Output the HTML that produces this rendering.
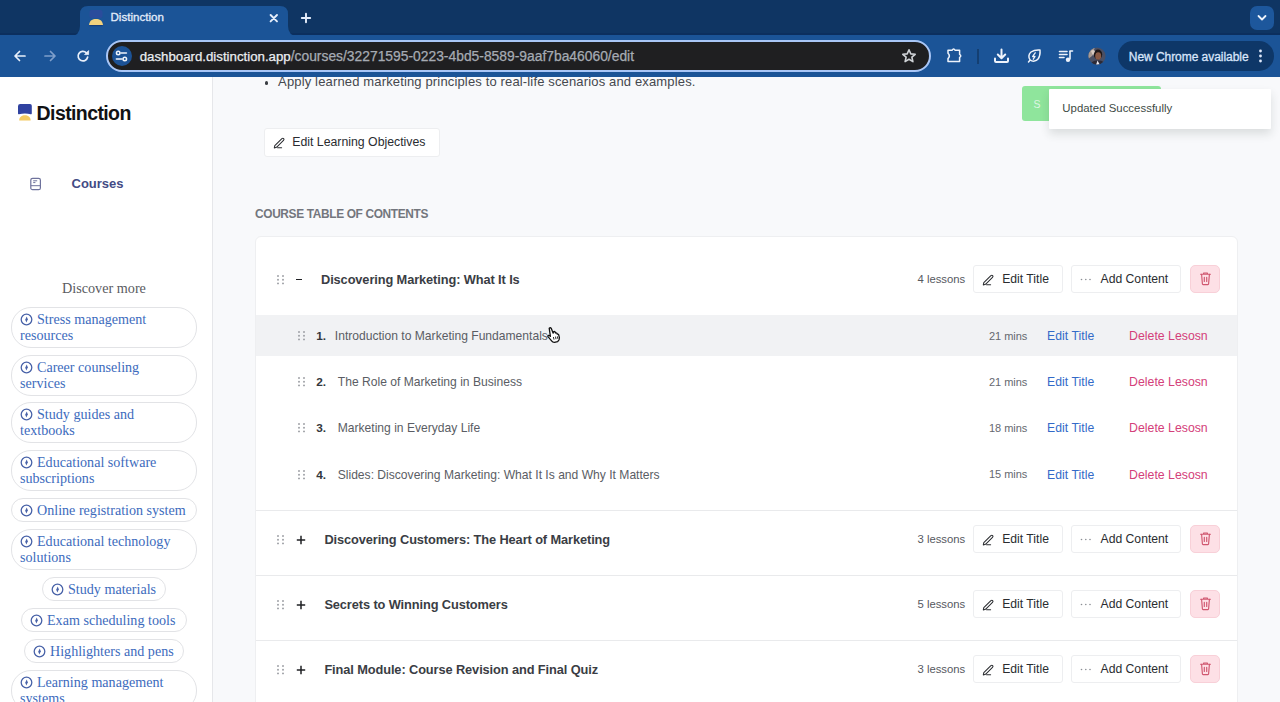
<!DOCTYPE html>
    <html><head><meta charset="utf-8"><title>Distinction</title>
    <style>
    *{box-sizing:border-box;margin:0;padding:0}
    html,body{width:1280px;height:702px;overflow:hidden;background:#f8f9fb;font-family:"Liberation Sans",sans-serif}
    .t{position:absolute;white-space:nowrap}
    .r{position:absolute}
    svg.r{overflow:visible}
    </style></head><body>
    <div class="r" style="left:0px;top:0px;width:1280px;height:34px;background:#0f3563"></div>
<div class="r" style="left:0px;top:34px;width:1280px;height:43px;background:#1b5497"></div>
<div class="r" style="left:0px;top:33px;width:1280px;height:1.5px;background:#0c2f5e"></div>
<svg class="r" style="left:70px;top:4px" width="230" height="32" viewBox="0 0 230 32"><path d="M0 32 Q10 32 10 22 L10 10 Q10 2 18 2 L210 2 Q218 2 218 10 L218 22 Q218 32 228 32 Z" fill="#1b5497"/></svg>
<svg class="r" style="left:88px;top:9px" width="16" height="18" viewBox="0 0 16 18"><rect x="1.5" y="1" width="13" height="8" rx="2" fill="#2a4c9c"/><path d="M1 16 C1.5 11.5 4.5 10 8 10 C11.5 10 14.5 11.5 15 16 Z" fill="#f2d27e"/><rect x="1.5" y="16" width="13" height="1.2" fill="#163d7a"/></svg>
<div class="t" style="left:110.50px;top:11.01px;font-size:11.6px;line-height:11.6px;color:#e3ecfa;font-weight:400;font-family:'Liberation Sans',sans-serif;letter-spacing:0.0px;-webkit-text-stroke:0.3px #e3ecfa">Distinction</div>
<svg class="r" style="left:268px;top:13px" width="11" height="11" viewBox="0 0 11 11"><path d="M2.6 2 L9 8.4 M9 2 L2.6 8.4" stroke="#e6eefb" stroke-width="1.9" stroke-linecap="round"/></svg>
<svg class="r" style="left:300px;top:12px" width="12" height="12" viewBox="0 0 12 12"><path d="M6 1.8 V10.2 M1.8 6 H10.2" stroke="#e6eefb" stroke-width="1.9" stroke-linecap="round"/></svg>
<div class="r" style="left:1250px;top:6px;width:24px;height:24px;background:#1d579c;border-radius:7px"></div>
<svg class="r" style="left:1257px;top:14px" width="10" height="8" viewBox="0 0 10 8"><path d="M1.5 2 L5 5.5 L8.5 2" stroke="#eef3fb" stroke-width="1.8" fill="none" stroke-linecap="round" stroke-linejoin="round"/></svg>
<svg class="r" style="left:12px;top:48px" width="16" height="16" viewBox="0 0 16 16"><path d="M13 8 H3.5 M7.5 3.5 L3 8 L7.5 12.5" stroke="#e8effa" stroke-width="1.7" fill="none" stroke-linecap="round" stroke-linejoin="round"/></svg>
<svg class="r" style="left:42px;top:48px" width="16" height="16" viewBox="0 0 16 16"><path d="M3 8 H12.5 M8.5 3.5 L13 8 L8.5 12.5" stroke="#7f9fcb" stroke-width="1.7" fill="none" stroke-linecap="round" stroke-linejoin="round"/></svg>
<svg class="r" style="left:75px;top:48px" width="16" height="16" viewBox="0 0 16 16"><path d="M12.6 9.2 A4.8 4.8 0 1 1 11.2 4.6" stroke="#e8effa" stroke-width="1.7" fill="none" stroke-linecap="round"/><path d="M13.6 2.6 V6.6 H9.6 Z" fill="#e8effa" stroke="#e8effa" stroke-width="0.8" stroke-linejoin="round"/></svg>
<div class="r" style="left:106px;top:40px;width:825px;height:32px;background:#1f1f21;border:2px solid #a9c6f6;border-radius:16px;box-sizing:border-box"></div>
<div class="r" style="left:111.7px;top:45.8px;width:20px;height:20px;background:#1c5296;border-radius:50%"></div>
<svg class="r" style="left:114px;top:48px" width="16" height="16" viewBox="0 0 16 16"><circle cx="4.2" cy="5" r="1.75" stroke="#f0f4fb" stroke-width="1.5" fill="none"/><path d="M7 5 H12.4" stroke="#f0f4fb" stroke-width="1.6" stroke-linecap="round"/><circle cx="10.8" cy="11" r="1.75" stroke="#f0f4fb" stroke-width="1.5" fill="none"/><path d="M2.4 11 H8" stroke="#f0f4fb" stroke-width="1.6" stroke-linecap="round"/></svg>
<div class="t" style="left:139.70px;top:50.02px;font-size:13.25px;line-height:13.25px;color:#eceef1;font-weight:400;font-family:'Liberation Sans',sans-serif;letter-spacing:0px;-webkit-text-stroke:0.25px currentColor">dashboard.distinction.app<span style="color:#a6abb3;font-size:13.85px">/courses/32271595-0223-4bd5-8589-9aaf7ba46060/edit</span></div>
<svg class="r" style="left:901px;top:48px" width="16" height="16" viewBox="0 0 16 16"><path d="M8 1.8 L9.8 5.9 L14.2 6.3 L10.9 9.2 L11.9 13.6 L8 11.3 L4.1 13.6 L5.1 9.2 L1.8 6.3 L6.2 5.9 Z" stroke="#cfd2d6" stroke-width="1.6" fill="none" stroke-linejoin="round"/></svg>
<svg class="r" style="left:942px;top:46px" width="24" height="20" viewBox="0 0 24 20"><path d="M6 4.3 H10 Q11.6 1.9 13.2 4.3 H17.6 V8.4 Q19.9 9.9 17.6 11.4 V15.4 H6 V12.6 Q8.7 9.9 6 7.2 Z" stroke="#eef3fb" stroke-width="1.5" fill="none" stroke-linejoin="round"/></svg>
<div class="r" style="left:977px;top:49px;width:1.5px;height:15px;background:#143f72"></div>
<svg class="r" style="left:993px;top:48px" width="17" height="16" viewBox="0 0 17 16"><path d="M8.5 1.5 V10 M4.8 6.5 L8.5 10.2 L12.2 6.5" stroke="#eef3fb" stroke-width="2" fill="none" stroke-linecap="round" stroke-linejoin="round"/><path d="M2 10.5 V13 Q2 14 3 14 H14 Q15 14 15 13 V10.5" stroke="#eef3fb" stroke-width="2" fill="none" stroke-linecap="round" stroke-linejoin="round"/></svg>
<svg class="r" style="left:1026px;top:48px" width="16" height="16" viewBox="0 0 16 16"><path d="M2.5 14 L4.2 12 A5.6 5.6 0 0 1 5 4 Q8.5 1.5 14 2 Q14.5 7.5 12 11 A5.6 5.6 0 0 1 4.2 12" stroke="#eef3fb" stroke-width="1.5" fill="none" stroke-linejoin="round" stroke-linecap="round"/><path d="M9.2 4.8 L6.6 8.5 H9 L7.3 11.2" stroke="#eef3fb" stroke-width="1.3" fill="none" stroke-linejoin="round" stroke-linecap="round"/></svg>
<svg class="r" style="left:1058px;top:48px" width="16" height="16" viewBox="0 0 16 16"><path d="M1.5 3.5 H9 M1.5 6.5 H9 M1.5 9.5 H6" stroke="#eef3fb" stroke-width="1.6" stroke-linecap="round"/><path d="M12 3 V11.5" stroke="#eef3fb" stroke-width="1.6"/><path d="M12 3 H14.5" stroke="#eef3fb" stroke-width="1.6" stroke-linecap="round"/><circle cx="10" cy="11.8" r="2.2" fill="#eef3fb"/></svg>
<svg class="r" style="left:1088px;top:47px" width="18" height="18" viewBox="0 0 18 18"><defs><clipPath id="av"><circle cx="9" cy="9" r="8.6"/></clipPath></defs><g clip-path="url(#av)"><rect width="18" height="18" fill="#4a4f63"/><path d="M0 0 H7 L4 9 L0 12 Z" fill="#a89a92"/><ellipse cx="10" cy="7.5" rx="4.2" ry="5" fill="#1e1717"/><ellipse cx="10.2" cy="9" rx="3" ry="3.8" fill="#8a5a45"/><path d="M2 18 Q4 13 10 13.5 Q16 13 17 18 Z" fill="#2c2a36"/><path d="M8 18 L9.5 13.5 L12 18 Z" fill="#e9e8f0"/><path d="M3 4 Q5 2 7 4 L5 9 Z" fill="#d8cbc2"/></g></svg>
<div class="r" style="left:1118px;top:41px;width:156px;height:30px;background:#0e3768;border-radius:15px"></div>
<div class="t" style="left:1128.80px;top:51.01px;font-size:12.0px;line-height:12.0px;color:#d8e5fb;font-weight:400;font-family:'Liberation Sans',sans-serif;letter-spacing:-0.05px;-webkit-text-stroke:0.3px #d8e5fb">New Chrome available</div>
<svg class="r" style="left:1258px;top:48px" width="5" height="16" viewBox="0 0 5 16"><circle cx="2.5" cy="3" r="1.4" fill="#dfe9fb"/><circle cx="2.5" cy="8" r="1.4" fill="#dfe9fb"/><circle cx="2.5" cy="13" r="1.4" fill="#dfe9fb"/></svg>
<div class="r" style="left:0px;top:77px;width:1280px;height:625px;background:#f8f9fb"></div>
<div class="r" style="left:0px;top:77px;width:213px;height:625px;background:#fff;border-right:1px solid #e6e7ea"></div>
<svg class="r" style="left:17px;top:103px" width="16" height="19" viewBox="0 0 16 19"><path d="M1 3.2 Q1 1 3.2 1 H13 Q14.8 1 14.8 2.8 V10.6 Q14.8 11.6 13.8 11.3 Q8 9.6 2 11.3 Q1 11.6 1 10.6 Z" fill="#3042a0"/><path d="M2.2 17.4 C2.2 13.8 5 12.3 7.9 12.3 C10.8 12.3 13.6 13.8 13.6 17.4 Z" fill="#f3ca62"/></svg>
<div class="t" style="left:36.60px;top:104.01px;font-size:19.5px;line-height:19.5px;color:#111214;font-weight:700;font-family:'Liberation Sans',sans-serif;letter-spacing:-0.6px;">Distinction</div>
<svg class="r" style="left:29px;top:177px" width="13" height="14" viewBox="0 0 13 14"><rect x="1.8" y="1.3" width="9.6" height="11.4" rx="1.8" stroke="#6e729c" stroke-width="1.2" fill="none"/><path d="M1.8 8.7 H11.4 M4.2 3.8 H8.2 M4.2 5.6 H6.4" stroke="#6e729c" stroke-width="1.0"/></svg>
<div class="t" style="left:71.50px;top:177.00px;font-size:13.0px;line-height:13.0px;color:#434b85;font-weight:700;font-family:'Liberation Sans',sans-serif;letter-spacing:0px;">Courses</div>
<div class="t" style="left:62.00px;top:281.00px;font-size:14.2px;line-height:14.2px;color:#5a5b5f;font-weight:400;font-family:'Liberation Serif',serif;letter-spacing:0px;">Discover more</div>
<div class="r" style="left:11px;top:307px;width:186px;height:41px;border:1px solid #e2e3e6;border-radius:20px;background:#fff;box-sizing:border-box"></div>
<svg class="r" style="left:19.8px;top:313.3px" width="13" height="13" viewBox="0 0 13 13"><circle cx="6.5" cy="6.5" r="5.3" stroke="#4862a8" stroke-width="1.3" fill="none"/><path d="M6.7 3.4 L7.8 6.3 L6.4 9.6 L5.2 6.7 Z" fill="#4862a8"/></svg>
<div class="t" style="left:37.00px;top:312.00px;font-size:14.1px;line-height:14.1px;color:#3d6bbd;font-weight:400;font-family:'Liberation Serif',serif;letter-spacing:0px;">Stress management</div>
<div class="t" style="left:20.00px;top:328.00px;font-size:14.1px;line-height:14.1px;color:#3d6bbd;font-weight:400;font-family:'Liberation Serif',serif;letter-spacing:0px;">resources</div>
<div class="r" style="left:11px;top:355px;width:186px;height:41px;border:1px solid #e2e3e6;border-radius:20px;background:#fff;box-sizing:border-box"></div>
<svg class="r" style="left:19.8px;top:361.3px" width="13" height="13" viewBox="0 0 13 13"><circle cx="6.5" cy="6.5" r="5.3" stroke="#4862a8" stroke-width="1.3" fill="none"/><path d="M6.7 3.4 L7.8 6.3 L6.4 9.6 L5.2 6.7 Z" fill="#4862a8"/></svg>
<div class="t" style="left:37.00px;top:360.00px;font-size:14.1px;line-height:14.1px;color:#3d6bbd;font-weight:400;font-family:'Liberation Serif',serif;letter-spacing:0px;">Career counseling</div>
<div class="t" style="left:20.00px;top:376.00px;font-size:14.1px;line-height:14.1px;color:#3d6bbd;font-weight:400;font-family:'Liberation Serif',serif;letter-spacing:0px;">services</div>
<div class="r" style="left:11px;top:402px;width:186px;height:41px;border:1px solid #e2e3e6;border-radius:20px;background:#fff;box-sizing:border-box"></div>
<svg class="r" style="left:19.8px;top:408.3px" width="13" height="13" viewBox="0 0 13 13"><circle cx="6.5" cy="6.5" r="5.3" stroke="#4862a8" stroke-width="1.3" fill="none"/><path d="M6.7 3.4 L7.8 6.3 L6.4 9.6 L5.2 6.7 Z" fill="#4862a8"/></svg>
<div class="t" style="left:37.00px;top:407.00px;font-size:14.1px;line-height:14.1px;color:#3d6bbd;font-weight:400;font-family:'Liberation Serif',serif;letter-spacing:0px;">Study guides and</div>
<div class="t" style="left:20.00px;top:423.00px;font-size:14.1px;line-height:14.1px;color:#3d6bbd;font-weight:400;font-family:'Liberation Serif',serif;letter-spacing:0px;">textbooks</div>
<div class="r" style="left:11px;top:450px;width:186px;height:41px;border:1px solid #e2e3e6;border-radius:20px;background:#fff;box-sizing:border-box"></div>
<svg class="r" style="left:19.8px;top:456.3px" width="13" height="13" viewBox="0 0 13 13"><circle cx="6.5" cy="6.5" r="5.3" stroke="#4862a8" stroke-width="1.3" fill="none"/><path d="M6.7 3.4 L7.8 6.3 L6.4 9.6 L5.2 6.7 Z" fill="#4862a8"/></svg>
<div class="t" style="left:37.00px;top:455.00px;font-size:14.1px;line-height:14.1px;color:#3d6bbd;font-weight:400;font-family:'Liberation Serif',serif;letter-spacing:0px;">Educational software</div>
<div class="t" style="left:20.00px;top:471.00px;font-size:14.1px;line-height:14.1px;color:#3d6bbd;font-weight:400;font-family:'Liberation Serif',serif;letter-spacing:0px;">subscriptions</div>
<div class="r" style="left:11px;top:498px;width:186px;height:24px;border:1px solid #e2e3e6;border-radius:20px;background:#fff;box-sizing:border-box"></div>
<svg class="r" style="left:19.8px;top:503.5px" width="13" height="13" viewBox="0 0 13 13"><circle cx="6.5" cy="6.5" r="5.3" stroke="#4862a8" stroke-width="1.3" fill="none"/><path d="M6.7 3.4 L7.8 6.3 L6.4 9.6 L5.2 6.7 Z" fill="#4862a8"/></svg>
<div class="t" style="left:37.00px;top:503.00px;font-size:14.1px;line-height:14.1px;color:#3d6bbd;font-weight:400;font-family:'Liberation Serif',serif;letter-spacing:0px;">Online registration system</div>
<div class="r" style="left:11px;top:529px;width:186px;height:41px;border:1px solid #e2e3e6;border-radius:20px;background:#fff;box-sizing:border-box"></div>
<svg class="r" style="left:19.8px;top:535.3px" width="13" height="13" viewBox="0 0 13 13"><circle cx="6.5" cy="6.5" r="5.3" stroke="#4862a8" stroke-width="1.3" fill="none"/><path d="M6.7 3.4 L7.8 6.3 L6.4 9.6 L5.2 6.7 Z" fill="#4862a8"/></svg>
<div class="t" style="left:37.00px;top:534.00px;font-size:14.1px;line-height:14.1px;color:#3d6bbd;font-weight:400;font-family:'Liberation Serif',serif;letter-spacing:0px;">Educational technology</div>
<div class="t" style="left:20.00px;top:550.00px;font-size:14.1px;line-height:14.1px;color:#3d6bbd;font-weight:400;font-family:'Liberation Serif',serif;letter-spacing:0px;">solutions</div>
<div class="r" style="left:42px;top:577px;width:124px;height:24px;border:1px solid #e2e3e6;border-radius:20px;background:#fff;box-sizing:border-box"></div>
<svg class="r" style="left:50.8px;top:582.5px" width="13" height="13" viewBox="0 0 13 13"><circle cx="6.5" cy="6.5" r="5.3" stroke="#4862a8" stroke-width="1.3" fill="none"/><path d="M6.7 3.4 L7.8 6.3 L6.4 9.6 L5.2 6.7 Z" fill="#4862a8"/></svg>
<div class="t" style="left:68.00px;top:582.00px;font-size:14.1px;line-height:14.1px;color:#3d6bbd;font-weight:400;font-family:'Liberation Serif',serif;letter-spacing:0px;">Study materials</div>
<div class="r" style="left:21px;top:608px;width:166px;height:24px;border:1px solid #e2e3e6;border-radius:20px;background:#fff;box-sizing:border-box"></div>
<svg class="r" style="left:29.8px;top:613.5px" width="13" height="13" viewBox="0 0 13 13"><circle cx="6.5" cy="6.5" r="5.3" stroke="#4862a8" stroke-width="1.3" fill="none"/><path d="M6.7 3.4 L7.8 6.3 L6.4 9.6 L5.2 6.7 Z" fill="#4862a8"/></svg>
<div class="t" style="left:47.00px;top:613.00px;font-size:14.1px;line-height:14.1px;color:#3d6bbd;font-weight:400;font-family:'Liberation Serif',serif;letter-spacing:0px;">Exam scheduling tools</div>
<div class="r" style="left:24px;top:639px;width:160px;height:24px;border:1px solid #e2e3e6;border-radius:20px;background:#fff;box-sizing:border-box"></div>
<svg class="r" style="left:32.8px;top:644.5px" width="13" height="13" viewBox="0 0 13 13"><circle cx="6.5" cy="6.5" r="5.3" stroke="#4862a8" stroke-width="1.3" fill="none"/><path d="M6.7 3.4 L7.8 6.3 L6.4 9.6 L5.2 6.7 Z" fill="#4862a8"/></svg>
<div class="t" style="left:50.00px;top:644.00px;font-size:14.1px;line-height:14.1px;color:#3d6bbd;font-weight:400;font-family:'Liberation Serif',serif;letter-spacing:0px;">Highlighters and pens</div>
<div class="r" style="left:11px;top:670px;width:186px;height:41px;border:1px solid #e2e3e6;border-radius:20px;background:#fff;box-sizing:border-box"></div>
<svg class="r" style="left:19.8px;top:676.3px" width="13" height="13" viewBox="0 0 13 13"><circle cx="6.5" cy="6.5" r="5.3" stroke="#4862a8" stroke-width="1.3" fill="none"/><path d="M6.7 3.4 L7.8 6.3 L6.4 9.6 L5.2 6.7 Z" fill="#4862a8"/></svg>
<div class="t" style="left:37.00px;top:675.00px;font-size:14.1px;line-height:14.1px;color:#3d6bbd;font-weight:400;font-family:'Liberation Serif',serif;letter-spacing:0px;">Learning management</div>
<div class="t" style="left:20.00px;top:691.00px;font-size:14.1px;line-height:14.1px;color:#3d6bbd;font-weight:400;font-family:'Liberation Serif',serif;letter-spacing:0px;">systems</div>
<div class="r" style="left:264.5px;top:81px;width:3.6px;height:3.6px;background:#3a3d42;border-radius:50%"></div>
<div class="t" style="left:278.10px;top:75.00px;font-size:13.0px;line-height:13.0px;color:#45484e;font-weight:400;font-family:'Liberation Sans',sans-serif;letter-spacing:0.15px;">Apply learned marketing principles to real-life scenarios and examples.</div>
<div class="r" style="left:264px;top:128px;width:176px;height:29px;background:#fff;border:1px solid #edeef0;border-radius:3px;box-sizing:border-box"></div>
<svg class="r" style="left:272.5px;top:136.5px" width="12" height="12" viewBox="0 0 12 12"><path d="M8.9 1.6 Q9.9 0.8 10.7 1.6 Q11.4 2.4 10.5 3.3 L3.5 10.3 L1.3 10.9 L1.8 8.7 Z" stroke="#2b2d31" stroke-width="1.05" fill="none" stroke-linejoin="round"/><path d="M4.6 10.8 H8.6" stroke="#2b2d31" stroke-width="1.05" stroke-linecap="round"/></svg>
<div class="t" style="left:292.20px;top:136.01px;font-size:12.3px;line-height:12.3px;color:#2a2c30;font-weight:400;font-family:'Liberation Sans',sans-serif;letter-spacing:0px;">Edit Learning Objectives</div>
<div class="t" style="left:255.00px;top:209.00px;font-size:11.9px;line-height:11.9px;color:#73767d;font-weight:700;font-family:'Liberation Sans',sans-serif;letter-spacing:-0.35px;">COURSE TABLE OF CONTENTS</div>
<div class="r" style="left:255px;top:236px;width:983px;height:500px;background:#fff;border:1px solid #eeeff1;border-radius:6px;box-sizing:border-box"></div>
<svg class="r" style="left:276.5px;top:274.5px" width="8" height="10" viewBox="0 0 8 10"><circle cx="1" cy="1.0" r="0.95" fill="#9a9ca2"/><circle cx="6" cy="1.0" r="0.95" fill="#9a9ca2"/><circle cx="1" cy="4.7" r="0.95" fill="#9a9ca2"/><circle cx="6" cy="4.7" r="0.95" fill="#9a9ca2"/><circle cx="1" cy="8.4" r="0.95" fill="#9a9ca2"/><circle cx="6" cy="8.4" r="0.95" fill="#9a9ca2"/></svg>
<div class="r" style="left:295.8px;top:278.9px;width:5.8px;height:1.5px;background:#1f2024"></div>
<div class="t" style="left:321.00px;top:274.01px;font-size:12.8px;line-height:12.8px;color:#3a3d44;font-weight:700;font-family:'Liberation Sans',sans-serif;letter-spacing:-0.1px;">Discovering Marketing: What It Is</div>
<div class="t" style="left:917.50px;top:274.01px;font-size:11.3px;line-height:11.3px;color:#56595f;font-weight:400;font-family:'Liberation Sans',sans-serif;letter-spacing:0px;">4 lessons</div>
<div class="r" style="left:973px;top:265px;width:90px;height:28px;background:#fff;border:1px solid #edeef0;border-radius:3px;box-sizing:border-box"></div>
<svg class="r" style="left:981.5px;top:273.5px" width="12" height="12" viewBox="0 0 12 12"><path d="M8.9 1.6 Q9.9 0.8 10.7 1.6 Q11.4 2.4 10.5 3.3 L3.5 10.3 L1.3 10.9 L1.8 8.7 Z" stroke="#2b2d31" stroke-width="1.05" fill="none" stroke-linejoin="round"/><path d="M4.6 10.8 H8.6" stroke="#2b2d31" stroke-width="1.05" stroke-linecap="round"/></svg>
<div class="t" style="left:1002.20px;top:273.02px;font-size:12.2px;line-height:12.2px;color:#2a2c30;font-weight:400;font-family:'Liberation Sans',sans-serif;letter-spacing:0px;">Edit Title</div>
<div class="r" style="left:1071px;top:265px;width:110px;height:28px;background:#fff;border:1px solid #edeef0;border-radius:3px;box-sizing:border-box"></div>
<svg class="r" style="left:1080px;top:277.5px" width="12" height="3" viewBox="0 0 12 3"><circle cx="1.5" cy="1.5" r="0.8" fill="#8b8e94"/><circle cx="5.8" cy="1.5" r="0.8" fill="#8b8e94"/><circle cx="10" cy="1.5" r="0.8" fill="#8b8e94"/></svg>
<div class="t" style="left:1100.50px;top:273.02px;font-size:12.2px;line-height:12.2px;color:#2a2c30;font-weight:400;font-family:'Liberation Sans',sans-serif;letter-spacing:0px;">Add Content</div>
<div class="r" style="left:1190px;top:265px;width:30px;height:28px;background:#fde0e6;border:1px solid #f8d0d8;border-radius:5px;box-sizing:border-box"></div>
<svg class="r" style="left:1198.5px;top:272.2px" width="13" height="14" viewBox="0 0 13 14"><path d="M1.6 2.2 H11.4 M4.6 2.2 V1 H8.4 V2.2 M2.6 2.2 L3.4 12 Q3.5 12.6 4.1 12.6 H8.9 Q9.5 12.6 9.6 12 L10.4 2.2 M5.3 5.2 V9.4 M7.7 5.2 V9.4" stroke="#d0566f" stroke-width="1.15" fill="none" stroke-linecap="round" stroke-linejoin="round"/></svg>
<div class="r" style="left:256px;top:315px;width:981px;height:41px;background:#f1f2f4"></div>
<svg class="r" style="left:297.5px;top:331.0px" width="8" height="10" viewBox="0 0 8 10"><circle cx="1" cy="1.0" r="0.95" fill="#9a9ca2"/><circle cx="6" cy="1.0" r="0.95" fill="#9a9ca2"/><circle cx="1" cy="4.7" r="0.95" fill="#9a9ca2"/><circle cx="6" cy="4.7" r="0.95" fill="#9a9ca2"/><circle cx="1" cy="8.4" r="0.95" fill="#9a9ca2"/><circle cx="6" cy="8.4" r="0.95" fill="#9a9ca2"/></svg>
<div class="t" style="left:316.30px;top:331.01px;font-size:11.8px;line-height:11.8px;color:#34373d;font-weight:700;font-family:'Liberation Sans',sans-serif;letter-spacing:0px;">1.</div>
<div class="t" style="left:334.80px;top:330.01px;font-size:12.1px;line-height:12.1px;color:#5a5d64;font-weight:400;font-family:'Liberation Sans',sans-serif;letter-spacing:0px;">Introduction to Marketing Fundamentals</div>
<div class="t" style="left:989.00px;top:331.00px;font-size:11.0px;line-height:11.0px;color:#65686f;font-weight:400;font-family:'Liberation Sans',sans-serif;letter-spacing:-0.05px;">21 mins</div>
<div class="t" style="left:1047.10px;top:330.02px;font-size:12.2px;line-height:12.2px;color:#336ac8;font-weight:400;font-family:'Liberation Sans',sans-serif;letter-spacing:0.05px;">Edit Title</div>
<div class="t" style="left:1129.10px;top:330.01px;font-size:12.3px;line-height:12.3px;color:#d4407a;font-weight:400;font-family:'Liberation Sans',sans-serif;letter-spacing:0px;">Delete Lesosn</div>
<svg class="r" style="left:297.5px;top:377.0px" width="8" height="10" viewBox="0 0 8 10"><circle cx="1" cy="1.0" r="0.95" fill="#9a9ca2"/><circle cx="6" cy="1.0" r="0.95" fill="#9a9ca2"/><circle cx="1" cy="4.7" r="0.95" fill="#9a9ca2"/><circle cx="6" cy="4.7" r="0.95" fill="#9a9ca2"/><circle cx="1" cy="8.4" r="0.95" fill="#9a9ca2"/><circle cx="6" cy="8.4" r="0.95" fill="#9a9ca2"/></svg>
<div class="t" style="left:316.30px;top:377.01px;font-size:11.8px;line-height:11.8px;color:#34373d;font-weight:700;font-family:'Liberation Sans',sans-serif;letter-spacing:0px;">2.</div>
<div class="t" style="left:337.80px;top:376.01px;font-size:12.1px;line-height:12.1px;color:#5a5d64;font-weight:400;font-family:'Liberation Sans',sans-serif;letter-spacing:0px;">The Role of Marketing in Business</div>
<div class="t" style="left:989.00px;top:377.00px;font-size:11.0px;line-height:11.0px;color:#65686f;font-weight:400;font-family:'Liberation Sans',sans-serif;letter-spacing:-0.05px;">21 mins</div>
<div class="t" style="left:1047.10px;top:376.02px;font-size:12.2px;line-height:12.2px;color:#336ac8;font-weight:400;font-family:'Liberation Sans',sans-serif;letter-spacing:0.05px;">Edit Title</div>
<div class="t" style="left:1129.10px;top:376.01px;font-size:12.3px;line-height:12.3px;color:#d4407a;font-weight:400;font-family:'Liberation Sans',sans-serif;letter-spacing:0px;">Delete Lesosn</div>
<svg class="r" style="left:297.5px;top:423.1px" width="8" height="10" viewBox="0 0 8 10"><circle cx="1" cy="1.0" r="0.95" fill="#9a9ca2"/><circle cx="6" cy="1.0" r="0.95" fill="#9a9ca2"/><circle cx="1" cy="4.7" r="0.95" fill="#9a9ca2"/><circle cx="6" cy="4.7" r="0.95" fill="#9a9ca2"/><circle cx="1" cy="8.4" r="0.95" fill="#9a9ca2"/><circle cx="6" cy="8.4" r="0.95" fill="#9a9ca2"/></svg>
<div class="t" style="left:316.30px;top:423.01px;font-size:11.8px;line-height:11.8px;color:#34373d;font-weight:700;font-family:'Liberation Sans',sans-serif;letter-spacing:0px;">3.</div>
<div class="t" style="left:337.70px;top:422.01px;font-size:12.1px;line-height:12.1px;color:#5a5d64;font-weight:400;font-family:'Liberation Sans',sans-serif;letter-spacing:0px;">Marketing in Everyday Life</div>
<div class="t" style="left:989.00px;top:423.00px;font-size:11.0px;line-height:11.0px;color:#65686f;font-weight:400;font-family:'Liberation Sans',sans-serif;letter-spacing:-0.05px;">18 mins</div>
<div class="t" style="left:1047.10px;top:422.02px;font-size:12.2px;line-height:12.2px;color:#336ac8;font-weight:400;font-family:'Liberation Sans',sans-serif;letter-spacing:0.05px;">Edit Title</div>
<div class="t" style="left:1129.10px;top:422.01px;font-size:12.3px;line-height:12.3px;color:#d4407a;font-weight:400;font-family:'Liberation Sans',sans-serif;letter-spacing:0px;">Delete Lesosn</div>
<svg class="r" style="left:297.5px;top:469.7px" width="8" height="10" viewBox="0 0 8 10"><circle cx="1" cy="1.0" r="0.95" fill="#9a9ca2"/><circle cx="6" cy="1.0" r="0.95" fill="#9a9ca2"/><circle cx="1" cy="4.7" r="0.95" fill="#9a9ca2"/><circle cx="6" cy="4.7" r="0.95" fill="#9a9ca2"/><circle cx="1" cy="8.4" r="0.95" fill="#9a9ca2"/><circle cx="6" cy="8.4" r="0.95" fill="#9a9ca2"/></svg>
<div class="t" style="left:316.30px;top:470.01px;font-size:11.8px;line-height:11.8px;color:#34373d;font-weight:700;font-family:'Liberation Sans',sans-serif;letter-spacing:0px;">4.</div>
<div class="t" style="left:337.70px;top:469.01px;font-size:12.1px;line-height:12.1px;color:#5a5d64;font-weight:400;font-family:'Liberation Sans',sans-serif;letter-spacing:0px;">Slides: Discovering Marketing: What It Is and Why It Matters</div>
<div class="t" style="left:989.00px;top:469.00px;font-size:11.0px;line-height:11.0px;color:#65686f;font-weight:400;font-family:'Liberation Sans',sans-serif;letter-spacing:-0.05px;">15 mins</div>
<div class="t" style="left:1047.10px;top:469.02px;font-size:12.2px;line-height:12.2px;color:#336ac8;font-weight:400;font-family:'Liberation Sans',sans-serif;letter-spacing:0.05px;">Edit Title</div>
<div class="t" style="left:1129.10px;top:469.01px;font-size:12.3px;line-height:12.3px;color:#d4407a;font-weight:400;font-family:'Liberation Sans',sans-serif;letter-spacing:0px;">Delete Lesosn</div>
<div class="r" style="left:256px;top:510px;width:981px;height:1px;background:#e9eaec"></div>
<svg class="r" style="left:276.5px;top:534.5px" width="8" height="10" viewBox="0 0 8 10"><circle cx="1" cy="1.0" r="0.95" fill="#9a9ca2"/><circle cx="6" cy="1.0" r="0.95" fill="#9a9ca2"/><circle cx="1" cy="4.7" r="0.95" fill="#9a9ca2"/><circle cx="6" cy="4.7" r="0.95" fill="#9a9ca2"/><circle cx="1" cy="8.4" r="0.95" fill="#9a9ca2"/><circle cx="6" cy="8.4" r="0.95" fill="#9a9ca2"/></svg>
<svg class="r" style="left:295.5px;top:535.3px" width="10" height="10" viewBox="0 0 10 10"><path d="M5 0.8 V9.2 M0.8 5 H9.2" stroke="#1f2024" stroke-width="1.5"/></svg>
<div class="t" style="left:324.40px;top:534.01px;font-size:12.8px;line-height:12.8px;color:#3a3d44;font-weight:700;font-family:'Liberation Sans',sans-serif;letter-spacing:-0.1px;">Discovering Customers: The Heart of Marketing</div>
<div class="t" style="left:917.50px;top:534.01px;font-size:11.3px;line-height:11.3px;color:#56595f;font-weight:400;font-family:'Liberation Sans',sans-serif;letter-spacing:0px;">3 lessons</div>
<div class="r" style="left:973px;top:525px;width:90px;height:28px;background:#fff;border:1px solid #edeef0;border-radius:3px;box-sizing:border-box"></div>
<svg class="r" style="left:981.5px;top:533.5px" width="12" height="12" viewBox="0 0 12 12"><path d="M8.9 1.6 Q9.9 0.8 10.7 1.6 Q11.4 2.4 10.5 3.3 L3.5 10.3 L1.3 10.9 L1.8 8.7 Z" stroke="#2b2d31" stroke-width="1.05" fill="none" stroke-linejoin="round"/><path d="M4.6 10.8 H8.6" stroke="#2b2d31" stroke-width="1.05" stroke-linecap="round"/></svg>
<div class="t" style="left:1002.20px;top:533.02px;font-size:12.2px;line-height:12.2px;color:#2a2c30;font-weight:400;font-family:'Liberation Sans',sans-serif;letter-spacing:0px;">Edit Title</div>
<div class="r" style="left:1071px;top:525px;width:110px;height:28px;background:#fff;border:1px solid #edeef0;border-radius:3px;box-sizing:border-box"></div>
<svg class="r" style="left:1080px;top:537.5px" width="12" height="3" viewBox="0 0 12 3"><circle cx="1.5" cy="1.5" r="0.8" fill="#8b8e94"/><circle cx="5.8" cy="1.5" r="0.8" fill="#8b8e94"/><circle cx="10" cy="1.5" r="0.8" fill="#8b8e94"/></svg>
<div class="t" style="left:1100.50px;top:533.02px;font-size:12.2px;line-height:12.2px;color:#2a2c30;font-weight:400;font-family:'Liberation Sans',sans-serif;letter-spacing:0px;">Add Content</div>
<div class="r" style="left:1190px;top:525px;width:30px;height:28px;background:#fde0e6;border:1px solid #f8d0d8;border-radius:5px;box-sizing:border-box"></div>
<svg class="r" style="left:1198.5px;top:532.2px" width="13" height="14" viewBox="0 0 13 14"><path d="M1.6 2.2 H11.4 M4.6 2.2 V1 H8.4 V2.2 M2.6 2.2 L3.4 12 Q3.5 12.6 4.1 12.6 H8.9 Q9.5 12.6 9.6 12 L10.4 2.2 M5.3 5.2 V9.4 M7.7 5.2 V9.4" stroke="#d0566f" stroke-width="1.15" fill="none" stroke-linecap="round" stroke-linejoin="round"/></svg>
<div class="r" style="left:256px;top:575px;width:981px;height:1px;background:#e9eaec"></div>
<svg class="r" style="left:276.5px;top:599.5px" width="8" height="10" viewBox="0 0 8 10"><circle cx="1" cy="1.0" r="0.95" fill="#9a9ca2"/><circle cx="6" cy="1.0" r="0.95" fill="#9a9ca2"/><circle cx="1" cy="4.7" r="0.95" fill="#9a9ca2"/><circle cx="6" cy="4.7" r="0.95" fill="#9a9ca2"/><circle cx="1" cy="8.4" r="0.95" fill="#9a9ca2"/><circle cx="6" cy="8.4" r="0.95" fill="#9a9ca2"/></svg>
<svg class="r" style="left:295.5px;top:600.3px" width="10" height="10" viewBox="0 0 10 10"><path d="M5 0.8 V9.2 M0.8 5 H9.2" stroke="#1f2024" stroke-width="1.5"/></svg>
<div class="t" style="left:324.40px;top:599.01px;font-size:12.8px;line-height:12.8px;color:#3a3d44;font-weight:700;font-family:'Liberation Sans',sans-serif;letter-spacing:-0.1px;">Secrets to Winning Customers</div>
<div class="t" style="left:917.50px;top:599.01px;font-size:11.3px;line-height:11.3px;color:#56595f;font-weight:400;font-family:'Liberation Sans',sans-serif;letter-spacing:0px;">5 lessons</div>
<div class="r" style="left:973px;top:590px;width:90px;height:28px;background:#fff;border:1px solid #edeef0;border-radius:3px;box-sizing:border-box"></div>
<svg class="r" style="left:981.5px;top:598.5px" width="12" height="12" viewBox="0 0 12 12"><path d="M8.9 1.6 Q9.9 0.8 10.7 1.6 Q11.4 2.4 10.5 3.3 L3.5 10.3 L1.3 10.9 L1.8 8.7 Z" stroke="#2b2d31" stroke-width="1.05" fill="none" stroke-linejoin="round"/><path d="M4.6 10.8 H8.6" stroke="#2b2d31" stroke-width="1.05" stroke-linecap="round"/></svg>
<div class="t" style="left:1002.20px;top:598.02px;font-size:12.2px;line-height:12.2px;color:#2a2c30;font-weight:400;font-family:'Liberation Sans',sans-serif;letter-spacing:0px;">Edit Title</div>
<div class="r" style="left:1071px;top:590px;width:110px;height:28px;background:#fff;border:1px solid #edeef0;border-radius:3px;box-sizing:border-box"></div>
<svg class="r" style="left:1080px;top:602.5px" width="12" height="3" viewBox="0 0 12 3"><circle cx="1.5" cy="1.5" r="0.8" fill="#8b8e94"/><circle cx="5.8" cy="1.5" r="0.8" fill="#8b8e94"/><circle cx="10" cy="1.5" r="0.8" fill="#8b8e94"/></svg>
<div class="t" style="left:1100.50px;top:598.02px;font-size:12.2px;line-height:12.2px;color:#2a2c30;font-weight:400;font-family:'Liberation Sans',sans-serif;letter-spacing:0px;">Add Content</div>
<div class="r" style="left:1190px;top:590px;width:30px;height:28px;background:#fde0e6;border:1px solid #f8d0d8;border-radius:5px;box-sizing:border-box"></div>
<svg class="r" style="left:1198.5px;top:597.2px" width="13" height="14" viewBox="0 0 13 14"><path d="M1.6 2.2 H11.4 M4.6 2.2 V1 H8.4 V2.2 M2.6 2.2 L3.4 12 Q3.5 12.6 4.1 12.6 H8.9 Q9.5 12.6 9.6 12 L10.4 2.2 M5.3 5.2 V9.4 M7.7 5.2 V9.4" stroke="#d0566f" stroke-width="1.15" fill="none" stroke-linecap="round" stroke-linejoin="round"/></svg>
<div class="r" style="left:256px;top:640px;width:981px;height:1px;background:#e9eaec"></div>
<svg class="r" style="left:276.5px;top:664.5px" width="8" height="10" viewBox="0 0 8 10"><circle cx="1" cy="1.0" r="0.95" fill="#9a9ca2"/><circle cx="6" cy="1.0" r="0.95" fill="#9a9ca2"/><circle cx="1" cy="4.7" r="0.95" fill="#9a9ca2"/><circle cx="6" cy="4.7" r="0.95" fill="#9a9ca2"/><circle cx="1" cy="8.4" r="0.95" fill="#9a9ca2"/><circle cx="6" cy="8.4" r="0.95" fill="#9a9ca2"/></svg>
<svg class="r" style="left:295.5px;top:665.3px" width="10" height="10" viewBox="0 0 10 10"><path d="M5 0.8 V9.2 M0.8 5 H9.2" stroke="#1f2024" stroke-width="1.5"/></svg>
<div class="t" style="left:324.40px;top:664.01px;font-size:12.8px;line-height:12.8px;color:#3a3d44;font-weight:700;font-family:'Liberation Sans',sans-serif;letter-spacing:-0.1px;">Final Module: Course Revision and Final Quiz</div>
<div class="t" style="left:917.50px;top:664.01px;font-size:11.3px;line-height:11.3px;color:#56595f;font-weight:400;font-family:'Liberation Sans',sans-serif;letter-spacing:0px;">3 lessons</div>
<div class="r" style="left:973px;top:655px;width:90px;height:28px;background:#fff;border:1px solid #edeef0;border-radius:3px;box-sizing:border-box"></div>
<svg class="r" style="left:981.5px;top:663.5px" width="12" height="12" viewBox="0 0 12 12"><path d="M8.9 1.6 Q9.9 0.8 10.7 1.6 Q11.4 2.4 10.5 3.3 L3.5 10.3 L1.3 10.9 L1.8 8.7 Z" stroke="#2b2d31" stroke-width="1.05" fill="none" stroke-linejoin="round"/><path d="M4.6 10.8 H8.6" stroke="#2b2d31" stroke-width="1.05" stroke-linecap="round"/></svg>
<div class="t" style="left:1002.20px;top:663.02px;font-size:12.2px;line-height:12.2px;color:#2a2c30;font-weight:400;font-family:'Liberation Sans',sans-serif;letter-spacing:0px;">Edit Title</div>
<div class="r" style="left:1071px;top:655px;width:110px;height:28px;background:#fff;border:1px solid #edeef0;border-radius:3px;box-sizing:border-box"></div>
<svg class="r" style="left:1080px;top:667.5px" width="12" height="3" viewBox="0 0 12 3"><circle cx="1.5" cy="1.5" r="0.8" fill="#8b8e94"/><circle cx="5.8" cy="1.5" r="0.8" fill="#8b8e94"/><circle cx="10" cy="1.5" r="0.8" fill="#8b8e94"/></svg>
<div class="t" style="left:1100.50px;top:663.02px;font-size:12.2px;line-height:12.2px;color:#2a2c30;font-weight:400;font-family:'Liberation Sans',sans-serif;letter-spacing:0px;">Add Content</div>
<div class="r" style="left:1190px;top:655px;width:30px;height:28px;background:#fde0e6;border:1px solid #f8d0d8;border-radius:5px;box-sizing:border-box"></div>
<svg class="r" style="left:1198.5px;top:662.2px" width="13" height="14" viewBox="0 0 13 14"><path d="M1.6 2.2 H11.4 M4.6 2.2 V1 H8.4 V2.2 M2.6 2.2 L3.4 12 Q3.5 12.6 4.1 12.6 H8.9 Q9.5 12.6 9.6 12 L10.4 2.2 M5.3 5.2 V9.4 M7.7 5.2 V9.4" stroke="#d0566f" stroke-width="1.15" fill="none" stroke-linecap="round" stroke-linejoin="round"/></svg>
<div class="r" style="left:1022px;top:86px;width:139px;height:35px;background:#8fe59c;border-radius:3px"></div>
<div class="t" style="left:1033.50px;top:99.00px;font-size:10.5px;line-height:10.5px;color:#def5e2;font-weight:400;font-family:'Liberation Sans',sans-serif;letter-spacing:0px;">S</div>
<div class="r" style="left:1049px;top:88.5px;width:222px;height:40px;background:#fff;box-shadow:0 5px 10px rgba(40,55,50,0.14);border-radius:1px"></div>
<div class="t" style="left:1062.30px;top:103.01px;font-size:11.4px;line-height:11.4px;color:#3e4b45;font-weight:400;font-family:'Liberation Sans',sans-serif;letter-spacing:0.02px;">Updated Successfully</div>
<svg class="r" style="left:545px;top:326px" width="18" height="18" viewBox="0 0 18 18"><path d="M4.2 2.2 Q5.4 1.3 6.3 2.4 L8.2 7.2 L8.4 5.8 Q9.4 5.2 10.1 6 L10.5 7 Q11.4 6.5 12 7.3 L12.3 8.2 Q13.2 7.9 13.7 8.8 L14.4 11.6 Q14.6 14.2 12.6 15.6 L9.4 16.4 Q7.6 16.3 6.6 14.8 L3 10.6 Q2.5 9.6 3.6 9.3 Q4.5 9.3 5.4 10.4 Z" fill="#fff" stroke="#111" stroke-width="1.3" stroke-linejoin="round"/><path d="M8.4 11 L9 13.6 M10.5 10.6 L11 13.2 M12.4 10.4 L12.8 12.8" stroke="#111" stroke-width="0.9"/></svg>
</body></html>
